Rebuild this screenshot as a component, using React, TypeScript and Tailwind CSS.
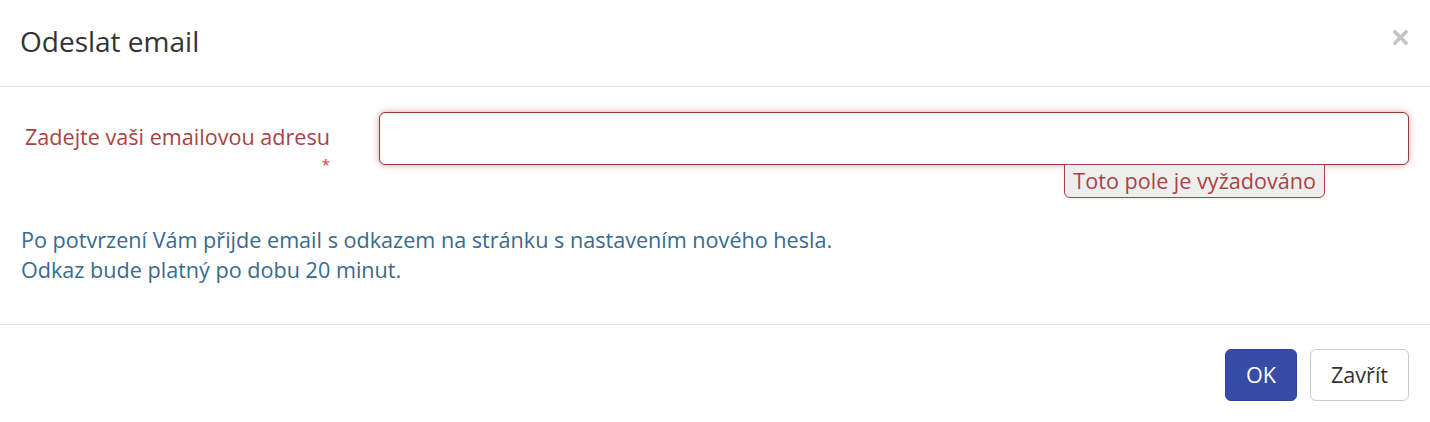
export default function App() {
  return (
    <div
      className="w-[1430px] h-[422px] bg-white text-[#333] overflow-hidden"
      style={{ fontFamily: '"Open Sans", "Noto Sans", sans-serif' }}
    >
      {/* Header */}
      <div className="h-[87px] border-b border-[#e5e5e5] flex items-start justify-between pl-[20px] pr-[22px] pt-[22px]">
        <h4 className="text-[28px] leading-[38px] text-[#333]">Odeslat email</h4>
        <button className="mt-[7px] w-[16px] h-[16px] flex items-center justify-center">
          <svg width="15" height="15" viewBox="0 0 15 15">
            <path d="M2 2 L13 13 M13 2 L2 13" stroke="#c4c4c4" strokeWidth="3.6" strokeLinecap="square" />
          </svg>
        </button>
      </div>

      {/* Body */}
      <div className="px-[21px] pt-[25px]">
        <div className="flex">
          <label className="w-[337px] pr-[28px] pt-[10px] text-right text-[21.6px] leading-[30px] text-[#a94442] shrink-0">
            <span className="block">Zadejte vaši emailovou adresu</span>
            <span className="block -mt-[3px] text-[15px] leading-[30px] text-[#e4322b]">*</span>
          </label>
          <div className="relative flex-1 ml-[21px]">
            <input
              type="text"
              className="w-full h-[53px] border border-[#963c3a] rounded-[6px] bg-white outline-none shadow-[inset_0_1px_1px_rgba(0,0,0,0.075),0_0_7px_#dba3a2]"
            />
            <div className="absolute right-[84px] top-[52px] h-[34px] px-[8px] flex items-center bg-[#eeeeee] border border-[#a94442] rounded-b-[6px] text-[21.6px] leading-[30px] text-[#a94442] shadow-[0_1px_3px_rgba(0,0,0,0.08)]">
              Toto pole je vyžadováno
            </div>
          </div>
        </div>

        <p className="mt-[46px] text-[21.6px] leading-[30px] text-[#3a6a8c]">
          Po potvrzení Vám přijde email s odkazem na stránku s nastavením nového hesla.
          <br />
          Odkaz bude platný po dobu 20 minut.
        </p>
      </div>

      {/* Footer */}
      <div className="mt-[39px] border-t border-[#e5e5e5] flex justify-end gap-[13px] pt-[24px] pr-[21px]">
        <button className="w-[72px] h-[52px] rounded-[6px] bg-[#364ca7] border border-[#2f4396] text-white text-[21.6px]">
          OK
        </button>
        <button className="w-[99px] h-[52px] rounded-[6px] bg-white border border-[#cccccc] text-[#333] text-[21.6px]">
          Zavřít
        </button>
      </div>
    </div>
  );
}
